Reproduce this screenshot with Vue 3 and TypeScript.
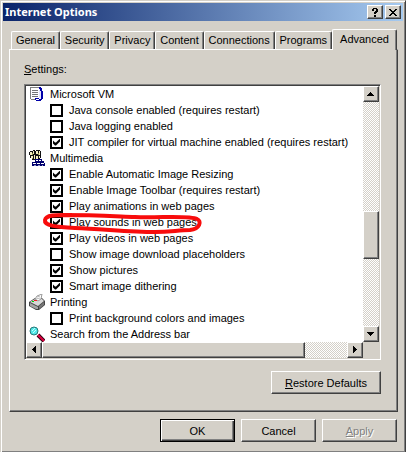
<script setup lang="ts">
import { ref } from 'vue'

type Icon = 'script' | 'media' | 'printer' | 'search'
interface Row {
  label: string
  icon?: Icon
  checked?: boolean
  circled?: boolean
}

const tabs = ['General', 'Security', 'Privacy', 'Content', 'Connections', 'Programs', 'Advanced']
const active = ref('Advanced')

const rows = ref<Row[]>([
  { label: 'Microsoft VM', icon: 'script' },
  { label: 'Java console enabled (requires restart)', checked: false },
  { label: 'Java logging enabled', checked: false },
  { label: 'JIT compiler for virtual machine enabled (requires restart)', checked: true },
  { label: 'Multimedia', icon: 'media' },
  { label: 'Enable Automatic Image Resizing', checked: true },
  { label: 'Enable Image Toolbar (requires restart)', checked: true },
  { label: 'Play animations in web pages', checked: true },
  { label: 'Play sounds in web pages', checked: true, circled: true },
  { label: 'Play videos in web pages', checked: true },
  { label: 'Show image download placeholders', checked: false },
  { label: 'Show pictures', checked: true },
  { label: 'Smart image dithering', checked: true },
  { label: 'Printing', icon: 'printer' },
  { label: 'Print background colors and images', checked: false },
  { label: 'Search from the Address bar', icon: 'search' },
])
</script>

<template>
  <main class="window">
    <header class="titlebar">
      <h1 class="title">Internet Options</h1>
      <button class="raised caption" type="button" aria-label="Help">
        <svg width="8" height="9" viewBox="0 0 8 9" shape-rendering="crispEdges">
          <path d="M2 0h4v1h1v3h-1v1h-1v1h-2v-2h1v-1h1v-2h-2v2h-2v-2h1zM3 7h2v2h-2z" />
        </svg>
      </button>
      <button class="raised caption close" type="button" aria-label="Close">
        <svg width="8" height="7" viewBox="0 0 8 7" shape-rendering="crispEdges">
          <path d="M0 0h2v1h1v1h2v-1h1v-1h2v1h-1v1h-1v1h-1v1h1v1h1v1h1v1h-2v-1h-1v-1h-2v1h-1v1h-2v-1h1v-1h1v-1h1v-1h-1v-1h-1v-1h-1z" />
        </svg>
      </button>
    </header>

    <div class="body">
      <div class="tabs" role="tablist">
        <button
          v-for="tab in tabs"
          :key="tab"
          type="button"
          role="tab"
          class="tab"
          :class="{ active: tab === active }"
          :aria-selected="tab === active"
          @click="active = tab"
        >{{ tab }}</button>
      </div>

      <section class="panel">
        <h2 id="settings" class="heading"><u>S</u>ettings:</h2>
        <div class="listbox">
          <ul class="rows" aria-labelledby="settings">
            <li v-for="row in rows" :key="row.label" class="row">
              <template v-if="row.icon">
                <svg v-if="row.icon === 'script'" class="icon" viewBox="0 0 16 16" shape-rendering="crispEdges">
                  <path d="M1 1h9v13h-9z" fill="#fff" />
                  <path d="M1 1h9v1h-9zM1 1h1v12h-1zM2 13h8v1h-8z" fill="#808080" />
                  <path d="M3 4h6v1h-6zM3 6h6v1h-6zM3 8h6v1h-6zM3 10h6v1h-6z" fill="#777" />
                  <path d="M10 1h2v1h1v3h-2v-2h-1zM12 5h2v8h-1v1h-1v1h-5v-1h-1v-2h4v1h2z" fill="#0000a8" />
                  <path d="M10 3h1v2h1v8h-1v-1h-1z" fill="#e4e4ff" />
                  <path d="M7 13h3v1h-3z" fill="#fff" />
                </svg>
                <svg v-else-if="row.icon === 'media'" class="icon" viewBox="0 0 16 16" shape-rendering="crispEdges">
                  <path d="M1 1h3v-1h2v1h1v-1h4v1h1v7h-1v2h-8v-2h-2v-3h-1v-3h1z" fill="#111" />
                  <path d="M1 2h2v3h-2zM4 1h1v3h-1zM7 1h2v3h-2zM10 1h1v4h-1zM2 6h2v2h-2zM5 5h1v4h-1zM7 6h2v3h-2zM10 6h1v2h-1z" fill="#f2eec0" />
                  <path d="M3 3h1v2h-1zM9 3h1v2h-1zM3 8h1v1h-1z" fill="#8d8a40" />
                  <path d="M6 9h7v2h2v2h1v3h-13v-4h3z" fill="#00006f" />
                  <path d="M7 10h2v1h-2zM10 10h2v1h-2zM4 13h3v1h-3zM8 13h3v1h-3zM12 13h3v1h-3z" fill="#fff" />
                  <path d="M5 15h2v1h-2zM9 15h2v1h-2zM13 15h1v1h-1z" fill="#8890c8" />
                </svg>
                <svg v-else-if="row.icon === 'printer'" class="icon" viewBox="0 0 16 16">
                  <path d="M0 8l6-4h7l3 3v4l-6 5h-3l-7-4z" fill="#444" />
                  <path d="M1 8l5-3h7l2 2-6 5z" fill="#d8d8d8" />
                  <path d="M1 9l8 4v2h-2l-6-3z" fill="#a4a4a4" />
                  <path d="M10 12l5-4v3l-5 4z" fill="#777" />
                  <path d="M6 5l2-3 5-2-1 5-3 2z" fill="#fff" stroke="#999" stroke-width="1" />
                  <path d="M8 3l3-1M7 5l4-1" stroke="#bbb" />
                  <path d="M3 7h2v1h-2z" fill="#00d000" />
                  <path d="M5 6h3v1h-3z" fill="#f02020" />
                </svg>
                <svg v-else class="icon" viewBox="0 0 16 16">
                  <path d="M9 9l6 6" stroke="#300010" stroke-width="4" />
                  <path d="M9 9l6 6" stroke="#e00040" stroke-width="2" />
                  <circle cx="5" cy="5" r="4" fill="#50e8e8" stroke="#287878" stroke-width="1" />
                  <path d="M3 5l3-3M4 7l3-3" stroke="#c4ffff" />
                </svg>
                <span class="group">{{ row.label }}</span>
              </template>
              <label v-else class="option">
                <input v-model="row.checked" class="check" type="checkbox" />
                <span>{{ row.label }}</span>
              </label>
              <svg v-if="row.circled" class="circle" viewBox="0 0 164 30" aria-hidden="true">
                <path d="M30 5C18 5 5 4 4 10C3 16 16 17 34 18C62 19 89 22 114 22C130 22 137 20 149 20C159 19 161 11 156 9C149 5 118 8 94 7C68 6 50 5 22 5" />
              </svg>
            </li>
          </ul>
          <div class="vbar">
            <button class="raised arrow" type="button" aria-label="Scroll up">
              <svg width="8" height="4" viewBox="0 0 8 4" shape-rendering="crispEdges"><path d="M3 0h1v1h1v1h1v1h1v1h-7v-1h1v-1h1v-1h1z" /></svg>
            </button>
            <div class="raised vthumb"></div>
            <button class="raised arrow end" type="button" aria-label="Scroll down">
              <svg width="8" height="4" viewBox="0 0 8 4" shape-rendering="crispEdges"><path d="M0 0h7v1h-1v1h-1v1h-1v1h-1v-1h-1v-1h-1v-1h-1z" /></svg>
            </button>
          </div>
          <div class="hbar">
            <button class="raised arrow" type="button" aria-label="Scroll left">
              <svg width="4" height="8" viewBox="0 0 4 8" shape-rendering="crispEdges"><path d="M0 3h1v-1h1v-1h1v-1h1v7h-1v-1h-1v-1h-1v-1h-1z" /></svg>
            </button>
            <div class="raised hthumb"></div>
            <button class="raised arrow end" type="button" aria-label="Scroll right">
              <svg width="4" height="8" viewBox="0 0 4 8" shape-rendering="crispEdges"><path d="M0 0h1v1h1v1h1v1h1v1h-1v1h-1v1h-1v1h-1z" /></svg>
            </button>
          </div>
        </div>
        <div class="restore">
          <button class="raised push wide" type="button"><span><u>R</u>estore Defaults</span></button>
        </div>
      </section>

      <footer class="actions">
        <button class="raised push default" type="button">OK</button>
        <button class="raised push" type="button">Cancel</button>
        <button class="raised push" type="button" disabled><span><u>A</u>pply</span></button>
      </footer>
    </div>
  </main>
</template>

<style>
body {
  margin: 0;
  background: #d4d0c8;
}
</style>

<style scoped>
.window {
  box-sizing: border-box;
  padding: 2px;
  border: 1px solid;
  border-color: #d4d0c8 #404040 #404040 #d4d0c8;
  box-shadow: inset 1px 1px #fff, inset -1px -1px #808080;
  background: #d4d0c8;
  color: #000;
  font: 11px/16px "Liberation Sans", Arial, sans-serif;
}
button {
  box-sizing: border-box;
  margin: 0;
  padding: 0;
  color: inherit;
  font: inherit;
}
svg {
  display: block;
  flex: none;
}
.raised {
  border: 1px solid;
  border-color: #fff #404040 #404040 #fff;
  box-shadow: inset -1px -1px #808080;
  background: #d4d0c8;
}
.titlebar {
  display: flex;
  align-items: center;
  height: 18px;
  padding: 0 2px;
  background: linear-gradient(90deg, #0a246a, #a6caf0);
}
.title {
  flex: 1;
  margin: 0;
  color: #fff;
  font: bold 11px/18px "Noto Sans", "Open Sans", sans-serif;
}
.caption {
  display: flex;
  align-items: center;
  justify-content: center;
  width: 16px;
  height: 14px;
}
.close {
  margin-left: 2px;
}
.body {
  padding: 8px 5px 7px 6px;
}
.tabs {
  display: flex;
  align-items: flex-end;
  padding: 0 1px 0 2px;
}
.tab {
  flex: 1 1 auto;
  height: 18px;
  border: 1px solid;
  border-color: #fff #404040 transparent #fff;
  border-bottom: 0;
  border-radius: 2px 2px 0 0;
  box-shadow: inset -1px 0 #808080;
  background: #d4d0c8;
  line-height: 17px;
}
.tab.active {
  position: relative;
  flex: 0 0 65px;
  height: 21px;
  margin-bottom: -1px;
  line-height: 18px;
  padding-bottom: 2px;
}
.panel {
  padding: 11px 16px 17px 14px;
  border: 1px solid;
  border-color: #fff #404040 #404040 #fff;
  box-shadow: inset -1px -1px #808080;
}
.heading {
  margin: 0 0 7px;
  font: inherit;
}
.listbox {
  display: grid;
  grid-template-columns: 1fr 16px;
  padding: 1px;
  border: 1px solid;
  border-color: #808080 #fff #fff #808080;
  box-shadow: inset 1px 1px #404040, inset -1px -1px #d4d0c8;
}
.rows {
  margin: 0;
  padding: 0 0 0 3px;
  background: #fff;
  list-style: none;
}
.row {
  position: relative;
  display: flex;
  align-items: center;
  height: 16px;
  white-space: nowrap;
}
.icon {
  width: 16px;
  height: 16px;
}
.group {
  padding-left: 5px;
}
.option {
  display: flex;
  align-items: center;
  gap: 6px;
  padding-left: 21px;
}
.check {
  appearance: none;
  box-sizing: border-box;
  width: 13px;
  height: 13px;
  margin: 0;
  border: 2px solid #000;
  background: #fff;
}
.check:checked::before {
  content: "";
  display: block;
  width: 7px;
  height: 7px;
  margin: 1px;
  background: #000;
  clip-path: polygon(0 2px, 2px 4px, 3px 4px, 7px 0, 7px 3px, 3px 7px, 2px 7px, 0 5px);
}
.circle {
  position: absolute;
  top: -4px;
  left: 12px;
  width: 164px;
  height: 30px;
  pointer-events: none;
  z-index: 1;
}
.circle path {
  fill: none;
  stroke: #f80c0c;
  stroke-width: 4;
  stroke-linecap: round;
}
.vbar,
.hbar {
  display: flex;
  background: repeating-conic-gradient(#fff 0 25%, #d4d0c8 0 50%) 0 0 / 2px 2px;
}
.vbar {
  flex-direction: column;
}
.arrow {
  display: flex;
  flex: none;
  align-items: center;
  justify-content: center;
  width: 16px;
  height: 16px;
}
.vthumb {
  box-sizing: border-box;
  height: 48px;
  margin-top: 109px;
}
.hthumb {
  box-sizing: border-box;
  width: 78%;
}
.end {
  margin-top: auto;
  margin-left: auto;
}
.restore {
  display: flex;
  justify-content: flex-end;
  padding-top: 11px;
}
.push {
  width: 75px;
  height: 23px;
}
.wide {
  width: 110px;
}
.default {
  border-color: #000;
  box-shadow: inset 1px 1px #fff, inset -1px -1px #404040, inset -2px -2px #808080;
}
.push:disabled {
  color: #808080;
  text-shadow: 1px 1px #fff;
}
.actions {
  display: flex;
  justify-content: flex-end;
  gap: 6px;
  padding: 7px 1px 1px 0;
}
</style>
